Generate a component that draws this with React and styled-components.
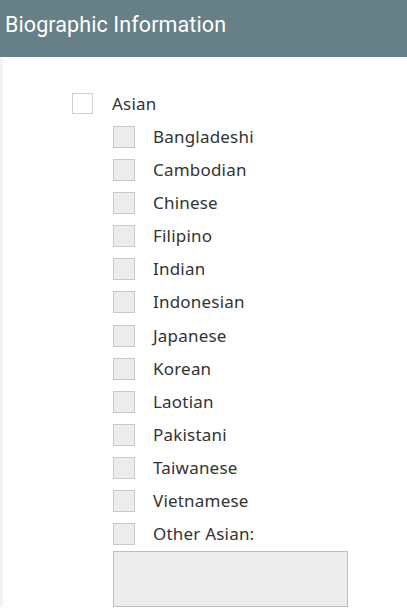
import React from "react";
import styled, { createGlobalStyle } from "styled-components";

const Global = createGlobalStyle`
  html, body { margin: 0; padding: 0; background: #ffffff; }
  body { font-family: "Noto Sans", "Open Sans", sans-serif; }
`;

const Page = styled.div`
  width: 407px;
  height: 616px;
  overflow: hidden;
  background: #fff;
`;

const Header = styled.header`
  height: 57px;
  background: #677f87;
  display: flex;
  align-items: center;
  padding-left: 5px;
  padding-bottom: 8px;
  box-sizing: border-box;
`;

const Title = styled.h1`
  margin: 0;
  font-family: "Roboto", "Open Sans", sans-serif;
  font-weight: 400;
  font-size: 21.5px;
  color: #ffffff;
  letter-spacing: 0.1px;
`;

const Body = styled.div`
  border-left: 3px solid #f2f2f2;
  padding: 30px 0 0 69px;
  display: flex;
  flex-direction: column;
`;

const Row = styled.label`
  height: 33.15px;
  display: flex;
  align-items: center;
  margin-left: ${(p) => (p.$sub ? 41 : 0)}px;
  gap: ${(p) => (p.$sub ? 18 : 19)}px;
`;

const Box = styled.span`
  width: ${(p) => (p.$sub ? 22 : 21)}px;
  height: ${(p) => (p.$sub ? 22 : 21)}px;
  box-sizing: border-box;
  border: 1px solid ${(p) => (p.$sub ? "#c9c9c9" : "#cfcfcf")};
  background: ${(p) => (p.$sub ? "#ececec" : "#ffffff")};
  flex: none;
`;

const Label = styled.span`
  font-size: 17px;
  color: #333333;
  letter-spacing: 0.2px;
  margin-top: -1px;
`;

const TextBox = styled.div`
  margin-left: 41px;
  margin-top: 0.5px;
  width: 235px;
  height: 56px;
  box-sizing: border-box;
  background: #ececec;
  border: 1px solid #bdbdbd;
`;

const items = [
  "Bangladeshi",
  "Cambodian",
  "Chinese",
  "Filipino",
  "Indian",
  "Indonesian",
  "Japanese",
  "Korean",
  "Laotian",
  "Pakistani",
  "Taiwanese",
  "Vietnamese",
  "Other Asian:",
];

export default function App() {
  return (
    <Page>
      <Global />
      <Header>
        <Title>Biographic Information</Title>
      </Header>
      <Body>
        <Row>
          <Box />
          <Label>Asian</Label>
        </Row>
        {items.map((t) => (
          <Row key={t} $sub>
            <Box $sub />
            <Label>{t}</Label>
          </Row>
        ))}
        <TextBox />
      </Body>
    </Page>
  );
}
